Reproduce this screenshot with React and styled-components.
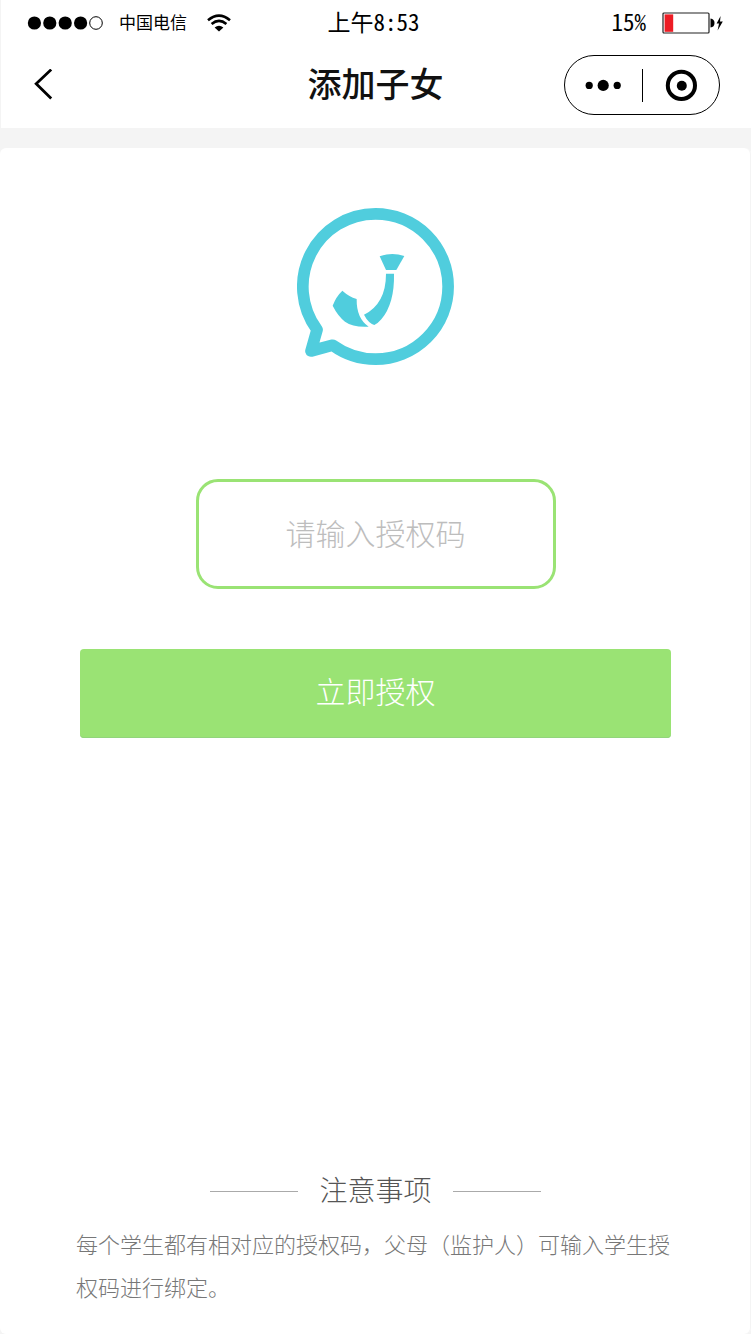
import React, { useState } from "react";
import styled, { createGlobalStyle } from "styled-components";

const App = () => {
  const [code, setCode] = useState("");

  const handleSubmit = (e) => {
    e.preventDefault();
  };

  return (
    <>
      <GlobalStyle />
      <Page>
        <Header>
          <StatusBar>
            <StatusGroup>
              <SignalIcon />
              <Carrier>中国电信</Carrier>
              <WifiIcon />
            </StatusGroup>
            <StatusText>上午8:53</StatusText>
            <StatusGroup $end>
              <StatusText>15%</StatusText>
              <BatteryIcon />
            </StatusGroup>
          </StatusBar>
          <NavBar>
            <BackButton type="button" aria-label="返回">
              <BackIcon />
            </BackButton>
            <Title>添加子女</Title>
            <Capsule>
              <CapsuleButton type="button" aria-label="更多">
                <MoreIcon />
              </CapsuleButton>
              <Divider />
              <CapsuleButton type="button" aria-label="关闭">
                <CloseIcon />
              </CapsuleButton>
            </Capsule>
          </NavBar>
        </Header>

        <Card>
          <Logo />
          <Form onSubmit={handleSubmit}>
            <CodeInput
              type="text"
              aria-label="授权码"
              placeholder="请输入授权码"
              value={code}
              onChange={(e) => setCode(e.target.value)}
            />
            <SubmitButton type="submit">立即授权</SubmitButton>
          </Form>
          <Notice>
            <NoticeTitle>注意事项</NoticeTitle>
            <NoticeText>
              每个学生都有相对应的授权码，父母（监护人）可输入学生授权码进行绑定。
            </NoticeText>
          </Notice>
        </Card>
      </Page>
    </>
  );
};

const SignalIcon = () => (
  <svg width="79" height="16" viewBox="0 0 79 16" aria-hidden="true">
    <circle cx="10.4" cy="8" r="6.6" />
    <circle cx="25.8" cy="8" r="6.6" />
    <circle cx="41.2" cy="8" r="6.6" />
    <circle cx="56.6" cy="8" r="6.6" />
    <circle cx="72" cy="8" r="6.3" fill="none" stroke="#000" />
  </svg>
);

const WifiIcon = () => (
  <svg width="24" height="18" viewBox="0 0 24 18" fill="none" stroke="#000" aria-hidden="true">
    <path d="M1 6.2Q12 -3 23 6.2" strokeWidth="2.6" />
    <path d="M4.6 10Q12 3.8 19.4 10" strokeWidth="2.6" />
    <path d="M7.6 13.4Q12 10 16.4 13.4L12 17.4Z" fill="#000" stroke="none" />
  </svg>
);

const BatteryIcon = () => (
  <svg width="61" height="22" viewBox="0 0 61 22" aria-hidden="true">
    <rect x="1" y="1" width="46" height="20" rx="1" fill="#fff" stroke="#222" strokeWidth="1.2" />
    <rect x="2.6" y="2.4" width="8.6" height="17.4" fill="#ed1c24" />
    <path d="M48.5 6.5Q52.5 7 52.5 11T48.5 15.5Z" />
    <path d="M58.6 4L54.6 11.6H57L55.6 18.4L60.8 9.6H58Z" />
  </svg>
);

const BackIcon = () => (
  <svg width="24" height="32" viewBox="0 0 24 32" fill="none" stroke="#000" strokeWidth="2.8" aria-hidden="true">
    <path d="M20.2 0.6L5.2 14.8L20.2 29.4" />
  </svg>
);

const MoreIcon = () => (
  <svg width="36" height="12" viewBox="0 0 36 12" aria-hidden="true">
    <circle cx="4.2" cy="6.4" r="3.6" />
    <circle cx="18.2" cy="6.4" r="5.6" />
    <circle cx="32.2" cy="6.4" r="3.6" />
  </svg>
);

const CloseIcon = () => (
  <svg width="32" height="32" viewBox="0 0 32 32" aria-hidden="true">
    <circle cx="16.4" cy="16.4" r="13.6" fill="none" stroke="#000" strokeWidth="4" />
    <circle cx="16.8" cy="16.8" r="5" />
  </svg>
);

const Logo = () => (
  <LogoSvg viewBox="36 39 471 471" aria-hidden="true">
    <path
      d="M96.2 404.1A218 218 0 0 1 271.5 56.5A218 218 0 0 1 271.5 492.5A218 218 0 0 1 143.2 450.7L78 468Z"
      fill="none"
      stroke="#50cddd"
      strokeWidth="35"
      strokeLinejoin="round"
    />
    <path d="M284 184Q320 171 358 183L334 225H303Z" />
    <path d="M303 236H327Q329 325 289 373Q279 385 268 390Q250 384 237 359Q303 326 303 236Z" />
    <path d="M172 287Q192 305 215 312Q214 370 251 395Q205 398 180 380Q158 362 143 332Q153 305 172 287Z" />
  </LogoSvg>
);

const GlobalStyle = createGlobalStyle`
  * {
    box-sizing: border-box;
  }

  body {
    margin: 0;
    background: #f4f4f4;
    color: #000;
    font-family: "Noto Sans CJK SC", sans-serif;
  }

  button,
  input {
    font-family: inherit;
  }

  svg {
    display: block;
    flex-shrink: 0;
  }
`;

const Page = styled.div`
  min-height: 100vh;
  display: flex;
  flex-direction: column;
  gap: 20px;
`;

const Header = styled.header`
  padding-bottom: 4px;
  background: #fff;
  box-shadow: inset 1px 0 #f4f4f4;
`;

const StatusBar = styled.div`
  display: grid;
  grid-template-columns: 1fr auto 1fr;
  align-items: center;
  height: 46px;
  padding: 0 28px 0 24px;
`;

const StatusGroup = styled.div`
  display: flex;
  align-items: center;
  justify-content: ${(p) => (p.$end ? "flex-end" : "flex-start")};
  gap: 16px;
`;

const Carrier = styled.span`
  margin-right: 4px;
  padding-bottom: 2px;
  font-size: 17px;
  line-height: 24px;
`;

const StatusText = styled.span`
  padding-bottom: 4px;
  font-size: 23px;
  line-height: 32px;
  font-feature-settings: "hwid";
`;

const NavBar = styled.nav`
  display: grid;
  grid-template-columns: 1fr auto 1fr;
  align-items: center;
  height: 78px;
  padding: 0 31px;
`;

const BackButton = styled.button`
  justify-self: start;
  padding: 0;
  border: none;
  background: none;
  cursor: pointer;
`;

const Title = styled.h1`
  margin: 0;
  padding-bottom: 4px;
  color: #111;
  font-size: 34px;
  font-weight: 500;
  line-height: 48px;
`;

const Capsule = styled.div`
  justify-self: end;
  display: flex;
  align-items: center;
  width: 156px;
  height: 60px;
  border: 1px solid #000;
  border-radius: 30px;
`;

const CapsuleButton = styled.button`
  flex: 1;
  display: flex;
  align-items: center;
  justify-content: center;
  height: 100%;
  padding: 0;
  border: none;
  background: none;
  cursor: pointer;
`;

const Divider = styled.span`
  width: 1px;
  height: 33px;
  background: #000;
`;

const Card = styled.main`
  flex: 1;
  display: flex;
  flex-direction: column;
  align-items: center;
  padding: 60px 76px 26px;
  border-radius: 6px;
  background: #fff;
  box-shadow: inset -1px 0 #f4f4f4;
`;

const LogoSvg = styled.svg`
  width: 157px;
  height: 157px;
  fill: #50cddd;
`;

const Form = styled.form`
  display: flex;
  flex-direction: column;
  align-items: center;
  gap: 60px;
  width: 100%;
  margin-top: 114px;
  padding: 0 4px;
`;

const CodeInput = styled.input`
  width: 100%;
  max-width: 360px;
  height: 110px;
  padding: 0 16px 4px;
  border: 3px solid #9ae374;
  border-radius: 22px;
  background: #fff;
  color: #333;
  font-size: 30px;
  font-weight: 300;
  text-align: center;
  outline: none;

  &::placeholder {
    color: #bdbdbd;
    opacity: 1;
  }
`;

const SubmitButton = styled.button`
  width: 100%;
  height: 89px;
  padding: 0 0 8px;
  border: none;
  border-radius: 4px;
  background: #9ae374;
  box-shadow: inset 0 -1px #92d47c;
  color: #fff;
  font-size: 30px;
  font-weight: 300;
  cursor: pointer;
`;

const Notice = styled.section`
  width: 100%;
  margin-top: auto;
`;

const NoticeTitle = styled.h2`
  display: flex;
  align-items: center;
  justify-content: center;
  gap: 21px;
  margin: 0 0 12px;
  color: #555;
  font-size: 28px;
  font-weight: 300;
  line-height: 42px;

  &::before,
  &::after {
    content: "";
    width: 88px;
    height: 1px;
    margin-top: 4px;
    background: #aaa;
  }
`;

const NoticeText = styled.p`
  margin: 0;
  color: #777;
  font-size: 22px;
  font-weight: 300;
  line-height: 43px;
`;

export default App;
